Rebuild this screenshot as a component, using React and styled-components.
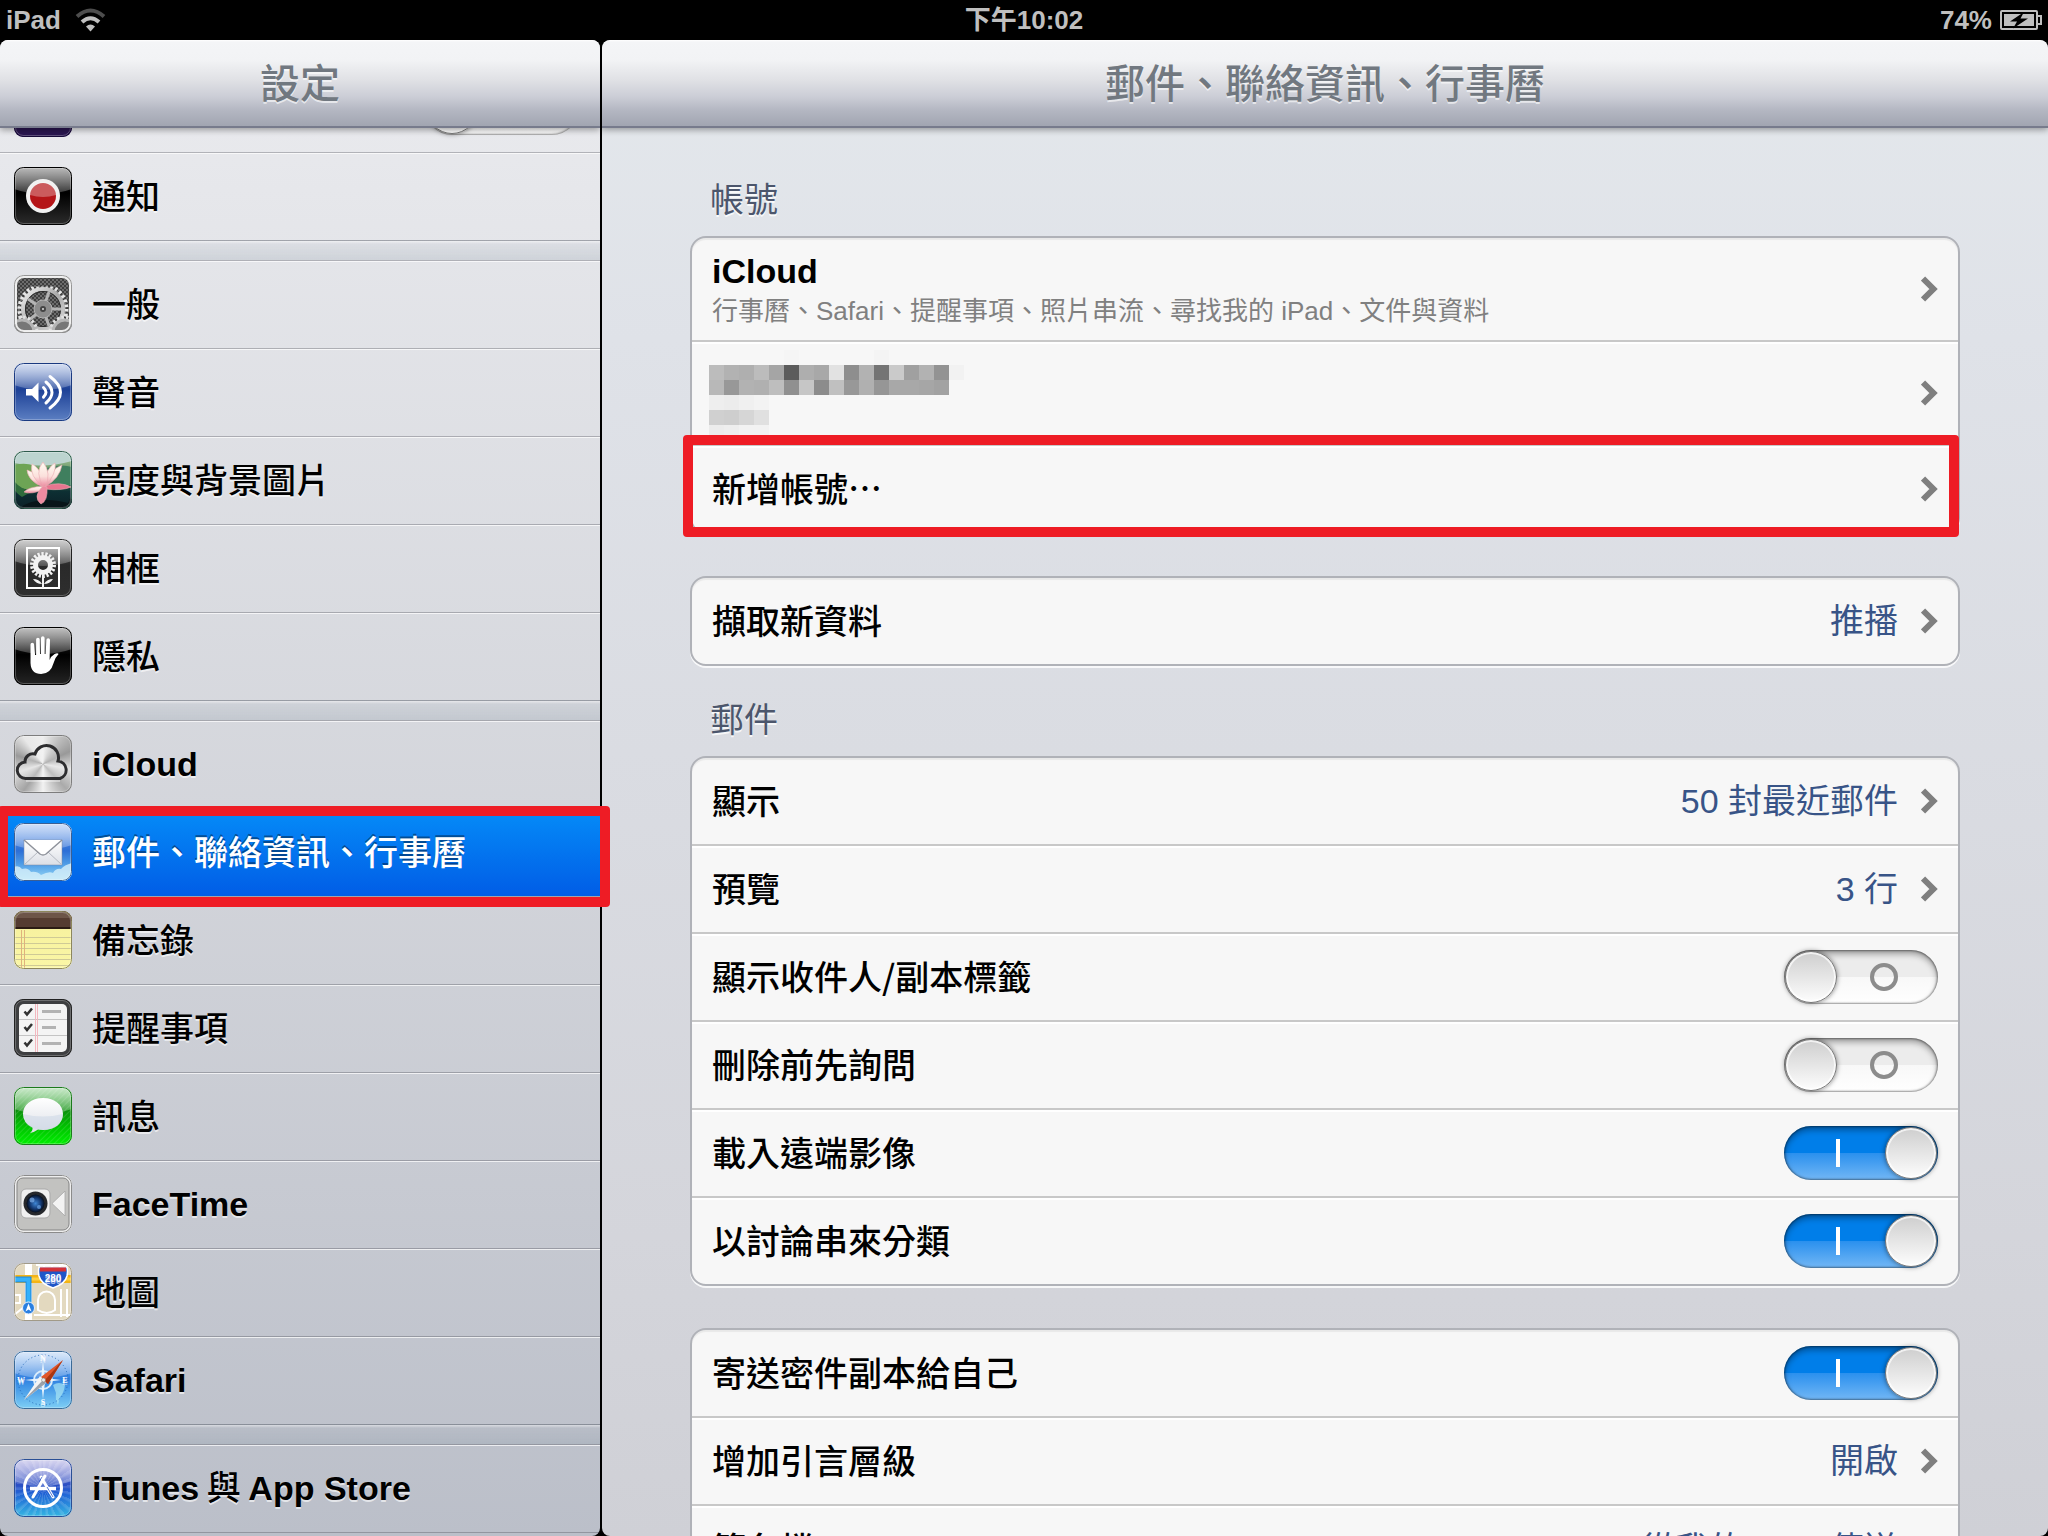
import { Fragment, useState } from "react";
import styled, { createGlobalStyle, css } from "styled-components";

const LATIN = `"Liberation Sans", "Noto Sans CJK TC", sans-serif`;
const CJK = `"Noto Sans CJK TC", "Liberation Sans", sans-serif`;

const COLORS = {
    highlight: "#ee1c25",
    value: "#385487",
    heading: "#4c566c",
    title: "#717880",
    chevron: "#7f7f7f",
    statusText: "#bfbfbf",
    line: "rgba(40, 40, 50, 0.28)",
    cardLine: "#c8c8c8",
    cardBorder: "#b0b2b8",
};

const GlobalStyle = createGlobalStyle`
    *, *::before, *::after {
        box-sizing: border-box;
    }

    body {
        margin: 0;
        background: #000;
        font-family: ${LATIN};
        font-size: 34px;
        color: #000;
    }

    button {
        border: 0;
        background: none;
        font: inherit;
        color: inherit;
        text-align: left;
        cursor: pointer;
    }

    ul, h1, h2, p {
        margin: 0;
        padding: 0;
        list-style: none;
        font-weight: normal;
    }
`

//gradients used by more than one of the app icons
const SharedDefs = () => (
    <HiddenSvg aria-hidden="true">
        <defs>
            <linearGradient id="gloss" x1="0" y1="0" x2="0" y2="1">
                <stop offset="0" stopColor="#fff" stopOpacity="0.7"/>
                <stop offset="1" stopColor="#fff" stopOpacity="0.2"/>
            </linearGradient>
            <linearGradient id="metal" x1="0" y1="0" x2="1" y2="1">
                <stop offset="0" stopColor="#f2f2f2"/>
                <stop offset="0.5" stopColor="#a8a8a8"/>
                <stop offset="1" stopColor="#dcdcdc"/>
            </linearGradient>
            <linearGradient id="paper" x1="0" y1="0" x2="0" y2="1">
                <stop offset="0" stopColor="#fff"/>
                <stop offset="1" stopColor="#dcdfe6"/>
            </linearGradient>
            <linearGradient id="petal" x1="0" y1="0" x2="0" y2="1">
                <stop offset="0" stopColor="#fffdf2"/>
                <stop offset="0.55" stopColor="#fbe0dc"/>
                <stop offset="1" stopColor="#ea7f98"/>
            </linearGradient>
            <radialGradient id="lens">
                <stop offset="0" stopColor="#3f86d4"/>
                <stop offset="0.6" stopColor="#153a74"/>
                <stop offset="1" stopColor="#050d1c"/>
            </radialGradient>
            <pattern id="dots" width="4" height="4" patternUnits="userSpaceOnUse">
                <rect width="4" height="4" fill="#6c6c6c"/>
                <circle cx="1" cy="1" r="1" fill="#2e2e2e"/>
                <circle cx="3" cy="3" r="1" fill="#2e2e2e"/>
            </pattern>
            <pattern id="stripes" width="4" height="4" patternUnits="userSpaceOnUse" patternTransform="rotate(45)">
                <rect width="1" height="4" fill="#fff" fillOpacity="0.12"/>
            </pattern>
        </defs>
    </HiddenSvg>
)

const Gloss = () => <path d="M0 0H58V22Q29 32 0 22Z" fill="url(#gloss)"/>

const AppIcon = ({background, edge = "#333", children}) => (
    <IconTile viewBox="0 0 58 58" $background={background} aria-hidden="true">
        {children}
        <rect x="0.5" y="0.5" width="57" height="57" rx="9" fill="none" stroke={edge}/>
        <rect x="1.5" y="1.5" width="55" height="55" rx="8" fill="none" stroke="#fff" strokeOpacity="0.25"/>
    </IconTile>
)

const MoonIcon = () => <AppIcon background="#2a1650" edge="#170a38"/>

const NotificationIcon = () => (
    <AppIcon background="linear-gradient(#222, #000 45%, #2c2c2c)" edge="#000">
        <Gloss/>
        <circle cx="29" cy="29" r="17" fill="#f1f1f1"/>
        <circle cx="29" cy="29" r="13" fill="#b51518"/>
        <path d="M16 28a13 13 0 0 1 26 0q-13 4-26 0Z" fill="#fff" fillOpacity="0.3"/>
    </AppIcon>
)

const GearIcon = () => (
    <AppIcon background="#d9d9d9" edge="#969696">
        <rect x="3" y="3" width="52" height="52" rx="6" fill="url(#dots)" stroke="#4a4a4a"/>
        <g clipPath="inset(3px round 6px)" fill="none">
            <circle cx="29" cy="34" r="23.5" stroke="#e6e6e6" strokeWidth="4" strokeDasharray="2.6 2.3"/>
            <circle cx="29" cy="34" r="20" stroke="url(#metal)" strokeWidth="4"/>
            <circle cx="29" cy="34" r="17.5" stroke="#2c2c2c"/>
            <path d="M29 34l6-17M29 34h18M29 34l6 17M29 34l-14 11M29 34L14 24" stroke="#b4b4b4" strokeWidth="3"/>
            <circle cx="29" cy="34" r="9" fill="#8d8d8d" stroke="#b5b5b5"/>
            <circle cx="29" cy="34" r="2" fill="#ddd" stroke="#444" strokeWidth="2"/>
            <circle cx="8" cy="57" r="14.5" stroke="#e2e2e2" strokeWidth="4" strokeDasharray="2.4 2.2"/>
            <circle cx="8" cy="57" r="12" fill="#777" stroke="#b5b5b5" strokeWidth="3"/>
            <circle cx="51" cy="57" r="14.5" stroke="#e2e2e2" strokeWidth="4" strokeDasharray="2.4 2.2"/>
            <circle cx="51" cy="57" r="12" fill="#777" stroke="#b5b5b5" strokeWidth="3"/>
        </g>
        <rect x="2" y="2" width="54" height="54" rx="8" fill="none" stroke="#ececec" strokeWidth="2"/>
    </AppIcon>
)

const SoundIcon = () => (
    <AppIcon background="linear-gradient(#7d9bd6, #1c4096 45%, #5d80c3)" edge="#1b3a80">
        <Gloss/>
        <path d="M12 26h6l6.500-6.500v19.500L18 32.500h-6Z" fill="#fff"/>
        <path d="M29.500 24.500q5 4.800 0 9.600M32 19q12 10.500 0 21M36 13.500q21 15.800 0 31.500" fill="none"
            stroke="#fff" strokeWidth="3" strokeLinecap="round"/>
    </AppIcon>
)

const LotusIcon = () => (
    <AppIcon background="linear-gradient(#b9cfa6, #4d8754 45%, #0d2f33 70%, #0b1f26)" edge="#2e5a4c">
        <path d="M0 0h58v10q-28 8-58 2Z" fill="#bcd4cf"/>
        <path d="M0 14q18-4 28 6l-4 18Q10 40 0 34Z" fill="#6da455"/>
        <path d="M30 18q16-6 28-2v18q-16 4-26-4Z" fill="#3f7f5e"/>
        <path d="M0 30q10 12 22 8L8 46Q2 42 0 38Z" fill="#2f6b3c"/>
        <path d="M4 58q18-14 50-6l4-8v14Z" fill="#081519"/>
        <g fill="url(#petal)" stroke="#e9a9b0" strokeWidth="0.6">
            <path d="M30 35Q14 36 10 41Q18 44 30 38Z"/>
            <path d="M31 35Q46 30 57 36Q48 40 31 38Z" fill="#e8758f"/>
            <path d="M29 36Q14 30 13 19Q24 22 31 35Z"/>
            <path d="M31 36Q46 27 48 14Q37 18 29 35Z"/>
            <path d="M29 36Q15 25 18 13Q27 17 31 35Z"/>
            <path d="M31 36Q43 22 41 12Q33 16 29 34Z"/>
            <path d="M30 37Q20 21 29 11Q38 22 31 37Z"/>
            <path d="M29 35Q18 46 27 53Q34 50 33 36Z" fill="#ed8ba1"/>
        </g>
    </AppIcon>
)

const FrameIcon = () => (
    <AppIcon background="linear-gradient(#6b6b6b, #2a2a2a 45%, #2e2e2e)" edge="#222">
        <Gloss/>
        <rect x="13" y="9" width="32" height="40" fill="none" stroke="#fff" strokeWidth="2"/>
        <circle cx="29" cy="26" r="11" fill="none" stroke="#f2f2f2" strokeWidth="4" strokeDasharray="2.2 1.640"/>
        <circle cx="29" cy="26" r="7.500" fill="none" stroke="#f2f2f2" strokeWidth="5"/>
        <path d="M28 36h2v13h-2ZM28 45q-3-5-9-5q3 5 9 5ZM30 45q3-5 9-5q-3 5-9 5Z" fill="#f2f2f2"/>
    </AppIcon>
)

const HandIcon = () => (
    <AppIcon background="linear-gradient(#3a3a3a, #000 48%, #252525)" edge="#000">
        <Gloss/>
        <path d="M16.500 17.500a1.800 1.800 0 0 1 3.600 0l1 10.500h1V12.500a1.800 1.800 0 0 1 3.600 0L26 27h1V11a1.800 1.800 0 0 1 3.600 0V27h1l.8-14a1.800 1.800 0 0 1 3.600 0l-.4 20q1.500-4 5-6q3-1.500 4 0q-4 4-5 9q-3 11-12.500 11Q17 47 16.500 36Z"
            fill="#fff"/>
    </AppIcon>
)

const CloudIcon = () => (
    <AppIcon edge="#7d7d7d"
        background="conic-gradient(#eee, #bbb 10%, #999 18%, #e2e2e2 28%, #aaa 38%, #f2f2f2 50%, #a3a3a3 60%, #dedede 70%, #999 80%, #e8e8e8 90%, #eee)">
        <path d="M12 43.500a8 8 0 0 1-1-16.500a8 8 0 0 1 10-8a12 12 0 0 1 23 7a9 9 0 0 1 2 17.500Z"
            fill="#fff" fillOpacity="0.25" stroke="#2d2d2f" strokeWidth="3"/>
        <path d="M12 46H46" stroke="#fff" strokeOpacity="0.8"/>
    </AppIcon>
)

const MailIcon = () => (
    <AppIcon background="linear-gradient(#6f9fea, #2d6fd6 48%, #4d9be6 70%, #9edcf6)" edge="#3a5f94">
        <Gloss/>
        <path d="M0 44q5-2 8 2q6-2 9 3q6-1 10 3q8-4 12-2q3-5 8-4q3-4 11-6v18H0Z" fill="#d7f0fa" fillOpacity="0.8"/>
        <rect x="10" y="17" width="38" height="25" fill="url(#paper)" stroke="#7f8ba0" strokeWidth="0.500"/>
        <path d="M10 42l14-13M48 42L34 29" stroke="#b5b9c2" fill="none"/>
        <path d="M10 17l16 14q3 2 6 0l16-14" stroke="#8e929b" strokeWidth="1.500" fill="#fff"/>
    </AppIcon>
)

const NotesIcon = () => (
    <AppIcon background="linear-gradient(#f5ef9c, #fbf7a6)" edge="#8d875c">
        <rect width="58" height="17" fill="#553c31"/>
        <rect width="58" height="7" fill="#6d5548"/>
        <rect y="16" width="58" height="2" fill="#2c1c14"/>
        <path d="M1 26.500h56M1 32.500h56M1 37.500h56M1 43.500h56M1 48.500h56M1 54.500h56" stroke="#cfca96"/>
        <path d="M7.500 19v38M10.500 19v38" stroke="#e0b27c"/>
    </AppIcon>
)

const RemindersIcon = () => (
    <AppIcon background="#3e3f41" edge="#222">
        <rect x="5" y="5" width="48" height="48" rx="5" fill="#f4f4f4"/>
        <path d="M5 20.500h48M5 36.500h48" stroke="#c4c4c4"/>
        <path d="M21.500 5v48M23.500 5v48" stroke="#f3b8bf"/>
        <path d="M28 12.500h19M28 28.500h14M28 44.500h19" stroke="#b3b3b3" strokeWidth="3"/>
        <path d="M10.500 12.500l2.500 3l5-6M10.500 28l2.500 3l5-6M10.500 43.500l2.500 3l5-6" stroke="#333"
            strokeWidth="2.500" fill="none"/>
    </AppIcon>
)

const MessagesIcon = () => (
    <AppIcon background="linear-gradient(#55b955, #0c8f0c 40%, #00c400 70%, #00f000)" edge="#1c7a1c">
        <rect width="58" height="58" fill="url(#stripes)"/>
        <Gloss/>
        <path d="M29 11c12 0 20 7 20 16s-8 16-20 16q-3 0-5-.4q-3 2.400-8 3.400q3-2.500 2.500-5.500Q9 36 9 27c0-9 8-16 20-16Z"
            fill="url(#paper)"/>
        <path d="M9 27q20 5 40 0q-1 12-12 15q-18 3-25-6Z" fill="#c9d6e6" fillOpacity="0.5"/>
    </AppIcon>
)

const FaceTimeIcon = () => (
    <AppIcon background="#e9e9e9" edge="#8b8b8b">
        <rect x="3" y="3" width="52" height="52" rx="6" fill="#c2c2c0" stroke="#858585"/>
        <rect x="7" y="14" width="29" height="29" rx="5" fill="#f0f0f0" stroke="#a9a9a9"/>
        <path d="M38 28.500L51 16v25Z" fill="#f3f3f3" stroke="#a5a5a5" strokeWidth="0.800"/>
        <circle cx="21.500" cy="28.500" r="12" fill="#26282c"/>
        <circle cx="21.500" cy="28.500" r="9" fill="url(#lens)"/>
        <circle cx="18" cy="25" r="2.500" fill="#7fb1ec" fillOpacity="0.7"/>
        <circle cx="25" cy="32" r="2" fill="#6ea6e8" fillOpacity="0.7"/>
    </AppIcon>
)

const MapsIcon = () => (
    <AppIcon background="#e3d9bf" edge="#a19a88">
        <g stroke="#fff" strokeWidth="2" fill="none">
            <path d="M14.500 0v58" strokeWidth="7"/>
            <path d="M0 32h6v8H0M0 52l10-8M20 52l38 0M24 47V37a8 8 0 0 1 17 0v10q-8 6-17 0ZM47 26v28M53 26v28M22 2h34M30 0v5M38 0v5M46 0v5"/>
        </g>
        <path d="M0 12h58v8H0Z" fill="#f4b415"/>
        <path d="M0 16h58" stroke="#fbd044" strokeWidth="3"/>
        <path d="M0 16.500h14.500V42" stroke="#1f86d6" strokeWidth="6" fill="none"/>
        <path d="M0 16.500h14.500V42" stroke="#33b1fb" strokeWidth="4" fill="none"/>
        <path d="M25 4h28q1 4 0 9q-2 8-14 12Q27 21 25 13q-1-5 0-9Z" fill="#1f56c8" stroke="#fff" strokeWidth="1.500"/>
        <path d="M26 4.500h26v4H26Z" fill="#d23238"/>
        <text x="39" y="18.500" textAnchor="middle" fontSize="10" fontWeight="bold" fill="#fff">280</text>
        <circle cx="14.500" cy="45" r="6" fill="#2a7fe0" stroke="#e8f1fb"/>
        <path d="M14.500 40.500l3 8l-3-2l-3 2Z" fill="#fff"/>
    </AppIcon>
)

const SafariIcon = () => (
    <AppIcon background="linear-gradient(#8db9ef, #2f7fe0 48%, #3f93e6 60%, #7fd0f5)" edge="#3b6a96">
        <Gloss/>
        <path d="M39 34q6-4 12 0q-1 8-5 12l-2 8q-3-5-2-12Z" fill="#a9e6f3" fillOpacity="0.7"/>
        <circle cx="29" cy="29" r="25" fill="none" stroke="#2469b8" strokeDasharray="1 2.500"/>
        <circle cx="29" cy="29" r="9" fill="none" stroke="#d9ecfb" strokeWidth="2"/>
        <path d="M29 10l2 17l16 2l-16 2l-2 17l-2-17l-16-2l16-2Z" fill="#e7f3fd"/>
        <g fontSize="8" fontWeight="bold" fill="#fff" textAnchor="middle" fontFamily="Liberation Serif">
            <text x="29" y="9.500">N</text>
            <text x="29" y="54">S</text>
            <text x="51" y="32">E</text>
            <text x="7" y="32">W</text>
        </g>
        <path d="M49 9L34 33l-7-7Z" fill="#e0562a"/>
        <path d="M49 9L34 33l-3.500-3.500Z" fill="#a93612"/>
        <path d="M10 49l16-24l6 7Z" fill="#f4f4f4"/>
        <path d="M10 49l22-17l-3-3Z" fill="#9aa1aa"/>
        <circle cx="29.500" cy="29" r="2" fill="#e9e9e9" stroke="#777" strokeWidth="0.500"/>
    </AppIcon>
)

const AppStoreIcon = () => (
    <AppIcon edge="#2a4f95"
        background="repeating-conic-gradient(#ffffff22 0 4deg, #ffffff00 8deg 14deg), linear-gradient(#7f78d0, #2b4fc4 45%, #1f63d6 60%, #35b7e2)">
        <Gloss/>
        <circle cx="29" cy="29" r="18.500" fill="none" stroke="#fff" strokeWidth="3"/>
        <path d="M16 29.500h26" stroke="#fff" strokeWidth="3.500"/>
        <path d="M31 17L19 38M27 18l12 20" stroke="#fff" strokeWidth="3" strokeLinecap="round"/>
        <path d="M28 18l-3 5M33 28l6 10" stroke="#2f5bc9" strokeWidth="0.800"/>
    </AppIcon>
)

const WifiIcon = () => (
    <svg width="31" height="24" viewBox="0 0 31 24" aria-label="Wi-Fi">
        <path d="M2 8.500q13.500-12 27 0" fill="none" stroke="#4d4d4d" strokeWidth="4"/>
        <path d="M7 14q8.500-7.500 17 0" fill="none" stroke="#bfbfbf" strokeWidth="4"/>
        <path d="M11 18.500q4.500-4 9 0L15.500 23.500Z" fill="#bfbfbf"/>
    </svg>
)

const BatteryIcon = () => (
    <svg width="42" height="20" viewBox="0 0 42 20" aria-label="充電中">
        <rect x="1" y="1" width="36" height="18" rx="1" fill="none" stroke="#bfbfbf" strokeWidth="2"/>
        <path d="M38 6h3v8h-3" fill="none" stroke="#bfbfbf" strokeWidth="2"/>
        <rect x="4" y="4" width="30" height="12" fill="#bfbfbf"/>
        <path d="M24 2L10 11.500h7L13 18.500L28 8.500h-7.500Z" fill="#000"/>
    </svg>
)

const Chevron = () => (
    <svg width="17" height="26" viewBox="0 0 17 26" aria-hidden="true">
        <path d="M2 2.500L12.500 13L2 23.500" fill="none" stroke={COLORS.chevron} strokeWidth="6"/>
    </svg>
)

//grey levels of the blurred out account, a null cell is left empty
const MOSAIC = [
    [null, null, null, null, null, 245, null, null, null, null, null, 244],
    [188, 178, 175, 188, 165, 92, 174, 168, 226, 142, 178, 116, 202, 160, 178, 147, 242],
    [184, 152, 178, 176, 190, 144, 198, 140, 192, 152, 176, 150, 168, 168, 166, 162],
    [238, 236, 240, 243],
    [208, 206, 214, 224],
    [236, 238, 242, 242],
];

const HiddenAccount = () => (
    <Mosaic width="255" height="90" role="img" aria-label="帳號">
        {MOSAIC.map((cells, row) => cells.map((level, col) => level && (
            <rect key={`${row}-${col}`} x={col * 15 - 3} y={row * 15 + 2} width="15" height="15"
                fill={`rgb(${level}, ${level}, ${level})`}/>
        )))}
    </Mosaic>
)

//latin words are set in bold, chinese ones in the medium weight
const MixedText = ({text}) => text.split(/([A-Za-z]+(?: [A-Za-z]+)*)/).map((part, i) => (
    i % 2 ? <strong key={i}>{part}</strong> : <Fragment key={i}>{part}</Fragment>
))

const MENU = [
    [
        {label: "勿擾模式", icon: MoonIcon, toggle: true},
        {label: "通知", icon: NotificationIcon},
    ],
    [
        {label: "一般", icon: GearIcon},
        {label: "聲音", icon: SoundIcon},
        {label: "亮度與背景圖片", icon: LotusIcon},
        {label: "相框", icon: FrameIcon},
        {label: "隱私", icon: HandIcon},
    ],
    [
        {label: "iCloud", icon: CloudIcon},
        {label: "郵件、聯絡資訊、行事曆", icon: MailIcon, selected: true},
        {label: "備忘錄", icon: NotesIcon},
        {label: "提醒事項", icon: RemindersIcon},
        {label: "訊息", icon: MessagesIcon},
        {label: "FaceTime", icon: FaceTimeIcon},
        {label: "地圖", icon: MapsIcon},
        {label: "Safari", icon: SafariIcon},
    ],
    [
        {label: "iTunes 與 App Store", icon: AppStoreIcon},
    ],
];

const MenuItem = ({label, icon: Icon, selected, toggle}) => {
    if (toggle) {
        return (
            <li>
                <MenuRow as="label">
                    <Icon/>
                    <Label><MixedText text={label}/></Label>
                    <Switch type="checkbox"/>
                </MenuRow>
            </li>
        )
    }
    return (
        <li>
            <MenuRow $selected={selected} aria-current={selected ? "page" : undefined}>
                <Icon/>
                <Label><MixedText text={label}/></Label>
            </MenuRow>
        </li>
    )
}

const LinkRow = ({label, value, detail, tall, highlighted, children}) => (
    <CardRow as="button" $tall={tall} $highlighted={highlighted}>
        {children || (
            <Label>
                <MixedText text={label}/>
                {detail && <Detail>{detail}</Detail>}
            </Label>
        )}
        {value && <Value>{value}</Value>}
        <Chevron/>
    </CardRow>
)

const SwitchRow = ({label, defaultOn = false}) => {
    const [on, setOn] = useState(defaultOn);
    return (
        <CardRow as="label">
            <Label><MixedText text={label}/></Label>
            <Switch type="checkbox" checked={on} onChange={(e) => setOn(e.target.checked)}/>
        </CardRow>
    )
}

const App = () => (
    <Screen lang="zh-Hant-TW">
        <GlobalStyle/>
        <SharedDefs/>
        <StatusBar>
            <StatusSide>iPad <WifiIcon/></StatusSide>
            <span>下午10:02</span>
            <StatusSide $end>74% <BatteryIcon/></StatusSide>
        </StatusBar>
        <Panes>
            <Sidebar>
                <Header><h1>設定</h1></Header>
                <Menu>
                    {MENU.map((group, i) => (
                        <MenuGroup key={i}>
                            {group.map((item) => <MenuItem key={item.label} {...item}/>)}
                        </MenuGroup>
                    ))}
                </Menu>
            </Sidebar>
            <DetailPane>
                <Header><h2>郵件、聯絡資訊、行事曆</h2></Header>
                <Sections>
                    <SectionTitle $first>帳號</SectionTitle>
                    <Card>
                        <LinkRow tall label="iCloud"
                            detail="行事曆、Safari、提醒事項、照片串流、尋找我的 iPad、文件與資料"/>
                        <LinkRow tall><HiddenAccount/></LinkRow>
                        <LinkRow highlighted label="新增帳號…"/>
                    </Card>
                    <Card $spaced>
                        <LinkRow label="擷取新資料" value="推播"/>
                    </Card>
                    <SectionTitle>郵件</SectionTitle>
                    <Card>
                        <LinkRow label="顯示" value="50 封最近郵件"/>
                        <LinkRow label="預覽" value="3 行"/>
                        <SwitchRow label="顯示收件人/副本標籤"/>
                        <SwitchRow label="刪除前先詢問"/>
                        <SwitchRow label="載入遠端影像" defaultOn/>
                        <SwitchRow label="以討論串來分類" defaultOn/>
                    </Card>
                    <Card $spaced>
                        <SwitchRow label="寄送密件副本給自己" defaultOn/>
                        <LinkRow label="增加引言層級" value="開啟"/>
                        <LinkRow label="簽名檔" value="從我的 iPad 傳送"/>
                    </Card>
                </Sections>
            </DetailPane>
        </Panes>
    </Screen>
)

const HiddenSvg = styled.svg`
    position: absolute;
    width: 0;
    height: 0;
`

const Screen = styled.div`
    height: 100vh;
    display: flex;
    flex-direction: column;
    overflow: hidden;
    background: #000;
`

const StatusBar = styled.div`
    flex: none;
    height: 40px;
    padding: 0 6px;
    display: grid;
    grid-template-columns: 1fr auto 1fr;
    align-items: center;
    color: ${COLORS.statusText};
    font-size: 26px;
    line-height: 38px;
    font-weight: bold;
`

const StatusSide = styled.div`
    display: flex;
    align-items: center;
    justify-content: ${({$end}) => $end ? "flex-end" : "flex-start"};
    gap: ${({$end}) => $end ? "8px" : "14px"};
`

const Panes = styled.div`
    flex: 1;
    min-height: 0;
    display: flex;
    gap: 2px;
`

//sits above the detail pane so the highlight can reach over the divider
const Sidebar = styled.nav`
    flex: 0 0 600px;
    position: relative;
    z-index: 1;
    border-radius: 8px;
    background: linear-gradient(#ebecef, #e6e7eb 10%, #d2d4da 55%, #bbbfc9);
`

const DetailPane = styled.main`
    flex: 1;
    min-width: 0;
    border-radius: 8px;
    overflow: hidden;
    background: linear-gradient(#e4e8ec, #dfe2e8 20%, #d4d5db 80%, #cfd0d6);
`

const Header = styled.header`
    position: relative;
    z-index: 1;
    height: 88px;
    padding-bottom: 4px;
    display: flex;
    align-items: center;
    justify-content: center;
    border-bottom: 2px solid #777b8c;
    border-radius: 8px 8px 0 0;
    background: linear-gradient(#fff, #f4f5f7 2px, #f2f3f5 20px, #e0e1e5 40px, #cbcdd6 57px, #b4b7c2 70px, #a1a5b1);
    box-shadow: 0 2px 6px rgba(0, 0, 0, 0.35);
    color: ${COLORS.title};
    text-shadow: 0 2px 0 rgba(255, 255, 255, 0.6);

    h1, h2 {
        font-family: ${CJK};
        font-size: 40px;
        line-height: 60px;
        font-weight: 500;
    }
`

//scrolled down so that the first row is half under the header
const Menu = styled.div`
    margin-top: -64px;
`

const MenuGroup = styled.ul`
    &:not(:first-child)::before {
        content: "";
        display: block;
        height: 20px;
        border-top: 1px solid ${COLORS.line};
        background: linear-gradient(rgba(255, 255, 255, 0.4), rgba(110, 130, 145, 0.08) 3px, rgba(110, 130, 145, 0.18));
    }

    &:last-child {
        border-bottom: 1px solid ${COLORS.line};
    }
`

const highlightFrame = css`
    position: relative;

    &::after {
        content: "";
        position: absolute;
        border: 10px solid ${COLORS.highlight};
        border-radius: 4px;
        pointer-events: none;
    }
`

const MenuRow = styled.button`
    width: 100%;
    height: 88px;
    padding: 0 21px 2px 14px;
    display: flex;
    align-items: center;
    gap: 20px;
    border-top: 1px solid ${COLORS.line};
    box-shadow: inset 0 1px 0 rgba(255, 255, 255, 0.7);
    text-shadow: 0 2px 0 rgba(255, 255, 255, 0.6);

    ${({$selected}) => $selected && css`
        ${highlightFrame}
        z-index: 1;
        border-top-color: transparent;
        box-shadow: none;
        background: linear-gradient(#058cf8, #015de6);
        color: #fff;
        text-shadow: 0 -2px 0 rgba(0, 0, 0, 0.4);

        &::after {
            inset: -3px -10px -11px -2px;
        }
    `}
`

const IconTile = styled.svg`
    flex: none;
    width: 58px;
    height: 58px;
    border-radius: 9px;
    background: ${({$background}) => $background};
    overflow: hidden;
`

const Label = styled.span`
    flex: 1;
    min-width: 0;
    padding-bottom: 2px;
    font-family: ${CJK};
    font-weight: 500;
    line-height: 40px;
    white-space: nowrap;

    strong {
        font-family: ${LATIN};
        font-weight: bold;
    }
`

const Detail = styled.span`
    display: block;
    padding-top: 4px;
    font-family: ${LATIN};
    font-size: 26px;
    line-height: 32px;
    font-weight: normal;
    color: #808080;
`

const Mosaic = styled.svg`
    display: block;
    margin-right: auto;
    overflow: visible;
`

const Sections = styled.div`
    padding: 50px 88px 0;
`

const SectionTitle = styled.h2`
    margin: ${({$first}) => $first ? "0" : "32px"} 0 18px;
    padding-left: 20px;
    font-family: ${CJK};
    font-size: 34px;
    line-height: 40px;
    color: ${COLORS.heading};
    text-shadow: 0 2px 0 rgba(255, 255, 255, 0.8);
`

const Card = styled.div`
    margin-top: ${({$spaced}) => $spaced ? "42px" : "0"};
    border: 2px solid ${COLORS.cardBorder};
    border-radius: 16px;
    background: #f7f7f7;
    box-shadow: 0 2px 0 rgba(255, 255, 255, 0.8), inset 0 2px 1px rgba(0, 0, 0, 0.06);
`

const CardRow = styled.div`
    width: 100%;
    height: ${({$tall}) => $tall ? "104px" : "88px"};
    padding: 0 20px;
    display: flex;
    align-items: center;
    gap: 23px;

    &:not(:last-child) {
        border-bottom: 2px solid ${COLORS.cardLine};
    }

    &:last-child {
        height: 86px;
    }

    &:not(:first-child) {
        box-shadow: inset 0 2px 0 #fff;
    }

    ${({$highlighted}) => $highlighted && css`
        ${highlightFrame}

        &::after {
            inset: -11px -1px -5px -9px;
        }
    `}
`

const Value = styled.span`
    flex: none;
    color: ${COLORS.value};
    line-height: 40px;
    white-space: nowrap;
`

//the knob and the mark swap places when it is on
const Switch = styled.input`
    appearance: none;
    flex: none;
    width: 154px;
    height: 54px;
    margin: 0;
    padding: 1px;
    display: flex;
    align-items: center;
    gap: 33px;
    border-radius: 27px;
    background: linear-gradient(#ececec 50%, #f8f8f8 50%, #fff);
    box-shadow: inset 0 0 2px 1px rgba(0, 0, 0, 0.4), inset 0 4px 6px rgba(0, 0, 0, 0.35);
    cursor: pointer;

    &::before {
        content: "";
        width: 52px;
        height: 52px;
        border: 1px solid #777;
        border-radius: 50%;
        background: linear-gradient(#cecece, #fdfdfd);
        box-shadow: inset 0 0 0 2px rgba(255, 255, 255, 0.7), 0 0 5px rgba(0, 0, 0, 0.5);
    }

    &::after {
        content: "";
        width: 28px;
        height: 28px;
        border: 4px solid #8c8c8c;
        border-radius: 50%;
    }

    &:checked {
        padding-left: 52px;
        justify-content: space-between;
        background: linear-gradient(#007ee9 50%, #2a90ee 50%, #73b7f5);
    }

    &:checked::before {
        order: 1;
    }

    &:checked::after {
        width: 4px;
        border: 0;
        border-radius: 0;
        background: #fff;
    }
`

export default App;
